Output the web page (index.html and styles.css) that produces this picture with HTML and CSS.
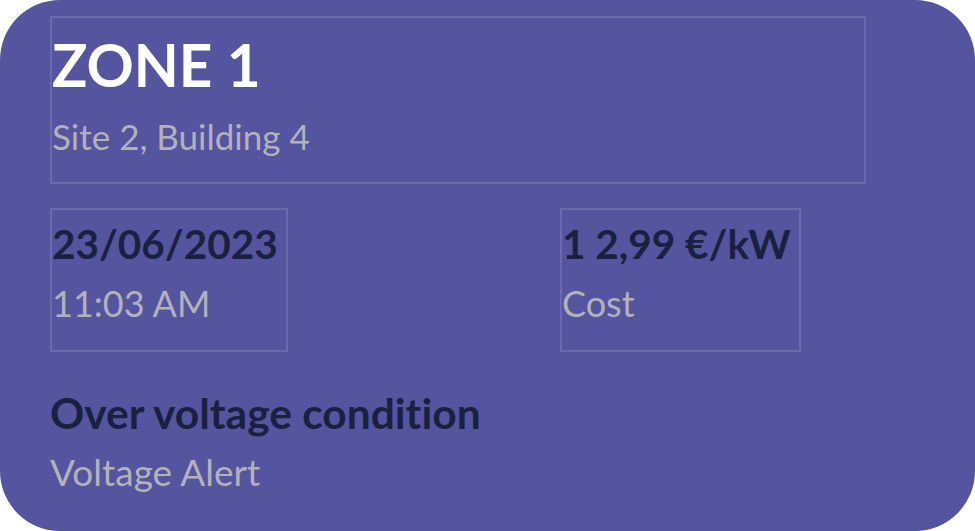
FILE: index.html
```html
<!DOCTYPE html>
<html lang="en">
<head>
<meta charset="utf-8">
<title>Zone 1</title>
<link rel="stylesheet" href="styles.css">
</head>
<body>
<div class="card">
  <div class="header box">
    <div class="zone">ZONE 1</div>
    <div class="sub site">Site 2, Building 4</div>
  </div>
  <div class="row">
    <div class="box stat date">
      <div class="value">23/06/2023</div>
      <div class="sub">11:03 AM</div>
    </div>
    <div class="box stat cost">
      <div class="value">1 2,99 €/kW</div>
      <div class="sub">Cost</div>
    </div>
  </div>
  <div class="alert">
    <div class="alert-title">Over voltage condition</div>
    <div class="sub alert-sub">Voltage Alert</div>
  </div>
</div>
</body>
</html>
```
FILE: styles.css
```css
html, body {
  margin: 0;
  padding: 0;
  background: #ffffff;
}
body {
  font-family: Lato, "Noto Sans", sans-serif;
  line-height: 1.2;
  font-variant-ligatures: none;
}
.card {
  box-sizing: border-box;
  width: 975px;
  height: 531px;
  background: #55549f;
  border-radius: 60px;
  padding: 16px 50px 0 50px;
}
.box {
  box-sizing: border-box;
  border: 2px solid rgba(255, 255, 255, 0.13);
}
.header {
  width: 816px;
  height: 168px;
  padding: 11px 0 0 0;
}
.zone {
  font-size: 58.5px;
  font-weight: 700;
  color: #ffffff;
}
.sub {
  font-size: 36px;
  color: #b3b1ba;
}
.site {
  font-size: 35px;
  margin-top: 16px;
}
.row {
  display: grid;
  grid-template-columns: 510px auto;
  margin-top: 24px;
  align-items: start;
}
.stat {
  justify-self: start;
  height: 144px;
  padding: 10px 8px 0 0;
}
.value {
  font-size: 40.5px;
  font-weight: 700;
  color: #1a2140;
}
.stat .sub {
  margin-top: 13px;
}
.alert {
  margin-top: 35px;
}
.alert-title {
  font-size: 42.5px;
  font-weight: 700;
  color: #1a2140;
}
.alert-sub {
  font-size: 37px;
  margin-top: 12px;
}
```
